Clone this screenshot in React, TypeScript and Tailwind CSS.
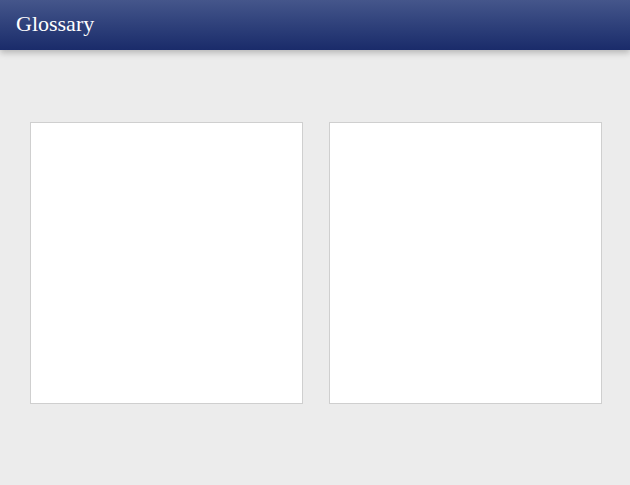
import React from "react";

export default function App() {
  return (
    <div className="w-[630px] h-[485px] bg-[#ececec] overflow-hidden" style={{ fontFamily: '"Liberation Serif", serif' }}>
      <header className="relative h-[50px] bg-gradient-to-b from-[#45568b] to-[#1a2b6a] flex items-center pl-4 shadow-[0_3px_6px_rgba(0,0,0,0.22)]">
        <h1 className="text-white text-[22px] leading-none font-normal mt-[-2px]">Glossary</h1>
      </header>
      <main className="flex gap-[26px] pl-[30px] pt-[72px]">
        <div className="w-[273px] h-[282px] bg-white border border-[#cfcfcf]" />
        <div className="w-[273px] h-[282px] bg-white border border-[#cfcfcf]" />
      </main>
    </div>
  );
}
